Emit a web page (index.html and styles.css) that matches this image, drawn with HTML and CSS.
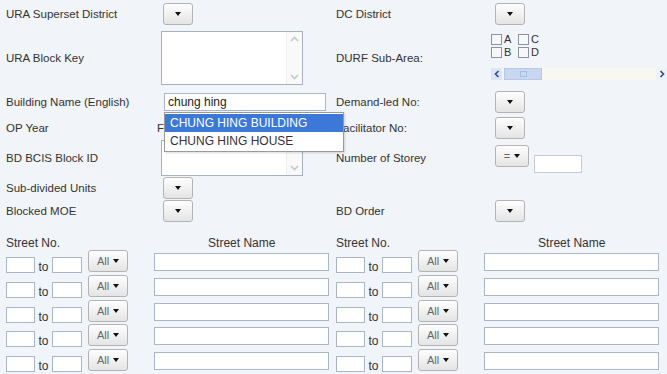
FILE: index.html
```html
<!DOCTYPE html>
<html lang="en">
<head>
    <meta charset="UTF-8">
    <meta name="viewport" content="width=device-width, initial-scale=1.0">
    <title>Building Search</title>
    <link rel="stylesheet" href="styles.css">
</head>
<body>
    <div class="filters">
        <!-- row 1 -->
        <div class="label">URA Superset District</div>
        <div class="field"><button class="dd"><span class="caret"></span></button></div>
        <div class="label">DC District</div>
        <div class="field right"><button class="dd"><span class="caret"></span></button></div>

        <!-- row 2 -->
        <div class="label">URA Block Key</div>
        <div class="field">
            <div class="listbox tall">
                <div class="listbox-body"></div>
                <div class="vscroll">
                    <svg width="9" height="6" viewBox="0 0 9 6"><path d="M1 5 L4.5 1.5 L8 5" fill="none" stroke="#c3c8cf" stroke-width="1.6"/></svg>
                    <svg width="9" height="6" viewBox="0 0 9 6"><path d="M1 1 L4.5 4.5 L8 1" fill="none" stroke="#c3c8cf" stroke-width="1.6"/></svg>
                </div>
            </div>
        </div>
        <div class="label">DURF Sub-Area:</div>
        <div class="field top">
            <div class="subarea">
                <div class="checks">
                    <label><input type="checkbox">A</label>
                    <label><input type="checkbox">C</label>
                    <label><input type="checkbox">B</label>
                    <label><input type="checkbox">D</label>
                </div>
                <div class="hscroll">
                    <span class="harrow">
                        <svg width="6" height="8" viewBox="0 0 6 8"><path d="M4.5 1 L1.5 4 L4.5 7" fill="none" stroke="#2b4a8a" stroke-width="1.6"/></svg>
                    </span>
                    <span class="hthumb"><span class="grip"></span></span>
                    <span class="htrack"></span>
                    <span class="harrow end">
                        <svg width="6" height="8" viewBox="0 0 6 8"><path d="M1.5 1 L4.5 4 L1.5 7" fill="none" stroke="#2b4a8a" stroke-width="1.6"/></svg>
                    </span>
                </div>
            </div>
        </div>

        <!-- row 3 -->
        <div class="label">Building Name (English)</div>
        <div class="field">
            <div class="autocomplete">
                <input class="text name-input" type="text" value="chung hing">
                <ul class="suggestions">
                    <li class="active">CHUNG HING BUILDING</li>
                    <li>CHUNG HING HOUSE</li>
                </ul>
            </div>
        </div>
        <div class="label">Demand-led No:</div>
        <div class="field right"><button class="dd"><span class="caret"></span></button></div>

        <!-- row 4 -->
        <div class="label">OP Year</div>
        <div class="field"><span class="from">F</span></div>
        <div class="label">Facilitator No:</div>
        <div class="field right"><button class="dd"><span class="caret"></span></button></div>

        <!-- row 5 -->
        <div class="label">BD BCIS Block ID</div>
        <div class="field">
            <div class="listbox short">
                <div class="listbox-body"></div>
                <div class="vscroll">
                    <svg width="9" height="6" viewBox="0 0 9 6"><path d="M1 5 L4.5 1.5 L8 5" fill="none" stroke="#c3c8cf" stroke-width="1.6"/></svg>
                    <svg width="9" height="6" viewBox="0 0 9 6"><path d="M1 1 L4.5 4.5 L8 1" fill="none" stroke="#c3c8cf" stroke-width="1.6"/></svg>
                </div>
            </div>
        </div>
        <div class="label">Number of Storey</div>
        <div class="field right storey">
            <button class="dd op"><span class="op-text">=</span><span class="caret"></span></button>
            <input class="text storey-input" type="text">
        </div>

        <!-- row 6 -->
        <div class="label">Sub-divided Units</div>
        <div class="field"><button class="dd"><span class="caret"></span></button></div>
        <div></div>
        <div></div>

        <!-- row 7 -->
        <div class="label">Blocked MOE</div>
        <div class="field"><button class="dd"><span class="caret"></span></button></div>
        <div class="label">BD Order</div>
        <div class="field right"><button class="dd"><span class="caret"></span></button></div>
    </div>

    <div class="streets">
        <div class="street-block" id="streetLeft"></div>
        <div class="street-block" id="streetRight"></div>
    </div>

    <script>
        function buildStreetBlock(id) {
            const block = document.getElementById(id);
            let html = `
                <div class="street-head">
                    <span class="head-no">Street No.</span>
                    <span class="head-name">Street Name</span>
                </div>`;
            for (let i = 0; i < 5; i++) {
                html += `
                <div class="street-row">
                    <input class="text no-from" type="text">
                    <span class="to">to</span>
                    <input class="text no-to" type="text">
                    <button class="dd all"><span class="op-text">All</span><span class="caret"></span></button>
                    <input class="text street-name" type="text">
                </div>`;
            }
            block.innerHTML = html;
        }

        buildStreetBlock("streetLeft");
        buildStreetBlock("streetRight");
    </script>
</body>
</html>
```

FILE: styles.css
```css
body {
    margin: 0;
    background: #f1f4f9;
    font-family: "Liberation Sans", Arial, sans-serif;
    font-size: 11.5px;
    color: #333;
    overflow: hidden;
}
.filters {
    display: grid;
    grid-template-columns: 155px 175px 155px 1fr;
    grid-template-rows: 28px 60px 28px 24px 36px 24px 22px;
    align-items: center;
    padding-left: 6px;
}
.field {
    display: flex;
    align-items: center;
}
.field.right {
    padding-left: 4px;
}
.field.top {
    align-self: start;
}

/* dropdown buttons */
.dd {
    width: 30px;
    height: 22px;
    margin: 0 0 0 2px;
    padding: 0;
    border: 1px solid #b3b3b3;
    border-radius: 3px;
    background: linear-gradient(#fefefe, #e4e4e4);
    display: flex;
    align-items: center;
    justify-content: center;
}
.field.right .dd {
    margin-left: 0;
}
.caret {
    width: 0;
    height: 0;
    border-left: 3.5px solid transparent;
    border-right: 3.5px solid transparent;
    border-top: 4px solid #111;
}
.op-text {
    font-family: "Liberation Sans", Arial, sans-serif;
    font-size: 11px;
    color: #666;
    margin-right: 4px;
}
.dd.op {
    width: 34px;
}

/* listbox with fake scrollbar */
.listbox {
    display: flex;
    width: 140px;
    border: 1px solid #a7b1bf;
    background: #fff;
}
.listbox.tall { height: 52px; }
.listbox.short { height: 34px; }
.listbox-body { flex: 1; }
.vscroll {
    width: 15px;
    border-left: 1px solid #eceef2;
    background: #f9f9fa;
    display: flex;
    flex-direction: column;
    justify-content: space-between;
    align-items: center;
    padding: 4px 0;
}

/* text inputs */
.text {
    box-sizing: border-box;
    margin: 0;
    padding: 0 3px;
    border: 1px solid #a9b6c8;
    background: #fff;
    font-family: "Liberation Sans", Arial, sans-serif;
    font-size: 12px;
    color: #222;
}
.autocomplete {
    position: relative;
    margin-left: 3px;
}
.name-input {
    width: 162px;
    height: 18px;
}
.suggestions {
    position: absolute;
    left: 0;
    top: 19px;
    width: 178px;
    margin: 0;
    padding: 1px 0;
    list-style: none;
    background: #fff;
    border: 1px solid #9a9a9a;
    box-shadow: 1px 1px 2px rgba(0, 0, 0, 0.15);
    z-index: 5;
}
.suggestions li {
    height: 18px;
    line-height: 18px;
    padding-left: 5px;
    font-size: 12px;
    color: #3a2f3a;
}
.suggestions li.active {
    background: #3b78d8;
    color: #fff;
}
.from {
    margin-left: -4px;
}

/* DURF sub-area */
.subarea {
    width: 176px;
    padding-top: 5px;
}
.checks {
    display: grid;
    grid-template-columns: 27px 27px;
}
.checks label {
    display: flex;
    align-items: center;
    height: 13px;
    font-size: 11px;
    line-height: 13px;
    color: #333;
}
.checks input {
    appearance: none;
    width: 11px;
    height: 11px;
    margin: 0 2px 0 0;
    border: 1px solid #8c939e;
    background: #f6f7f9;
}
.hscroll {
    display: flex;
    height: 12px;
    margin-top: 9px;
}
.harrow {
    width: 11px;
    background: #dbe5f4;
    display: flex;
    align-items: center;
    justify-content: center;
}
.harrow.end {
    background: #eef2f8;
}
.hthumb {
    width: 38px;
    margin-left: 2px;
    background: #c9d8f0;
    border: 1px solid #b5c8e6;
    box-sizing: border-box;
    display: flex;
    align-items: center;
    justify-content: center;
}
.grip {
    width: 5px;
    height: 4px;
    border: 1px solid #a9bddf;
}
.htrack {
    flex: 1;
    background: #f8f8f1;
}

/* number of storey */
.storey {
    align-items: flex-start;
    padding-top: 2px;
}
.storey-input {
    width: 48px;
    height: 18px;
    margin: 10px 0 0 5px;
    border-color: #c6ccd5;
}

/* street rows */
.streets {
    display: flex;
    padding-left: 6px;
    margin-top: 14px;
}
.street-block {
    width: 330px;
    flex: none;
}
.street-head {
    display: flex;
    height: 14px;
    align-items: center;
    font-size: 12px;
}
.head-no {
    width: 148px;
}
.head-name {
    width: 197px;
    text-align: center;
}
.street-row {
    display: flex;
    align-items: flex-start;
    height: 24.75px;
}
.no-from {
    width: 29px;
    height: 16px;
    margin-top: 7px;
}
.to {
    width: 17px;
    margin-top: 10px;
    text-align: center;
    font-size: 12px;
}
.no-to {
    width: 30px;
    height: 16px;
    margin-top: 7px;
}
.dd.all {
    width: 40px;
    margin-left: 6px;
}
.street-name {
    width: 175px;
    height: 18px;
    margin: 3px 0 0 26px;
}
```
